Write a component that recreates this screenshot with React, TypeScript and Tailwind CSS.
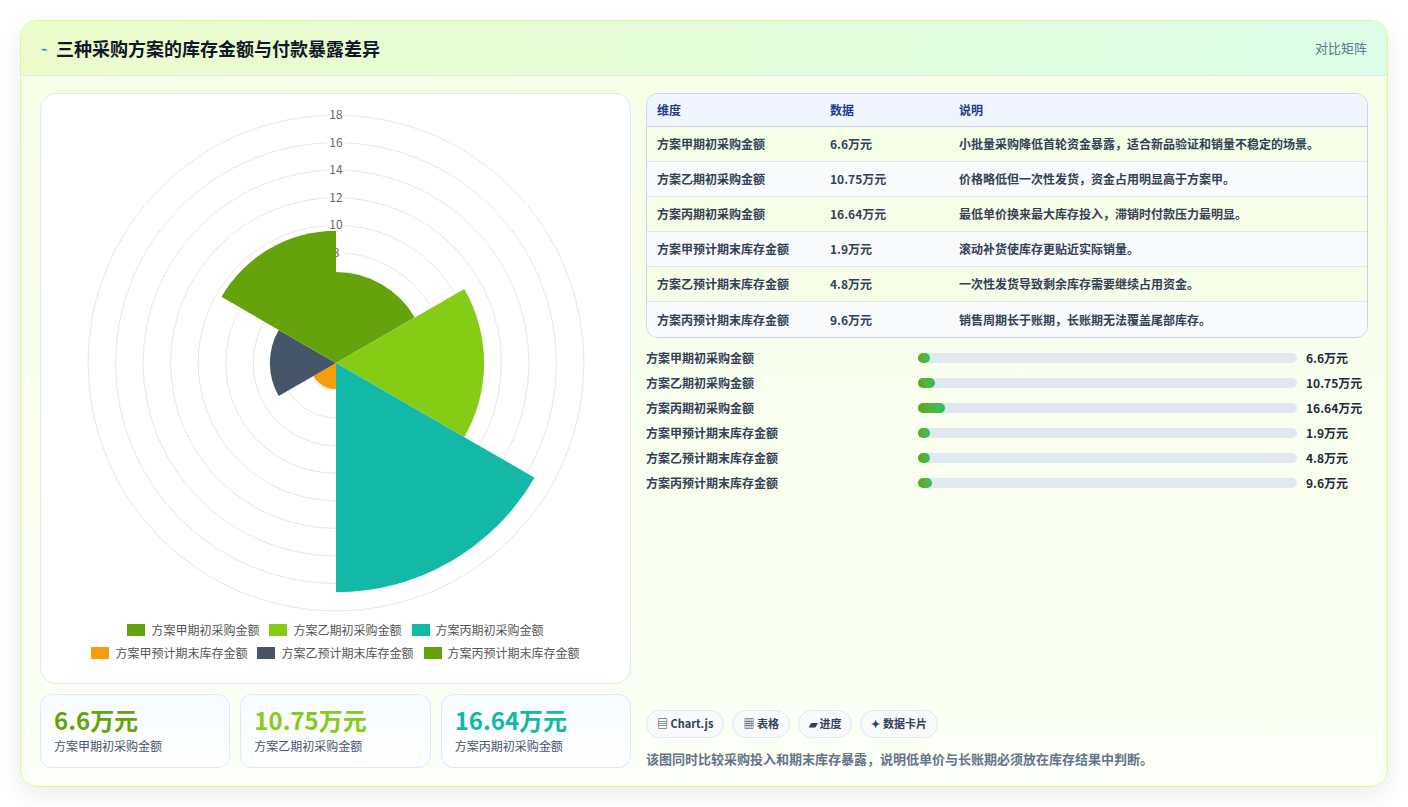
import React from "react";

const F = { fontFamily: '"Noto Sans CJK SC","Noto Sans",sans-serif' };

const segs = [
  { v: 6.6, c: "#65a30d", n: "方案甲期初采购金额" },
  { v: 10.75, c: "#84cc16", n: "方案乙期初采购金额" },
  { v: 16.64, c: "#14b8a6", n: "方案丙期初采购金额" },
  { v: 1.9, c: "#f59e0b", n: "方案甲预计期末库存金额" },
  { v: 4.8, c: "#475569", n: "方案乙预计期末库存金额" },
  { v: 9.6, c: "#65a30d", n: "方案丙预计期末库存金额" },
];

const rows = [
  ["方案甲期初采购金额", "6.6万元", "小批量采购降低首轮资金暴露，适合新品验证和销量不稳定的场景。"],
  ["方案乙期初采购金额", "10.75万元", "价格略低但一次性发货，资金占用明显高于方案甲。"],
  ["方案丙期初采购金额", "16.64万元", "最低单价换来最大库存投入，滞销时付款压力最明显。"],
  ["方案甲预计期末库存金额", "1.9万元", "滚动补货使库存更贴近实际销量。"],
  ["方案乙预计期末库存金额", "4.8万元", "一次性发货导致剩余库存需要继续占用资金。"],
  ["方案丙预计期末库存金额", "9.6万元", "销售周期长于账期，长账期无法覆盖尾部库存。"],
];

const bars = [12, 17, 27, 12, 12, 14];

function Polar() {
  const cx = 295, cy = 267, k = 248 / 18;
  const arc = (i: number, v: number) => {
    const r = v * k;
    const a0 = ((-90 + i * 60) * Math.PI) / 180;
    const a1 = ((-90 + (i + 1) * 60) * Math.PI) / 180;
    const x0 = cx + r * Math.cos(a0), y0 = cy + r * Math.sin(a0);
    const x1 = cx + r * Math.cos(a1), y1 = cy + r * Math.sin(a1);
    return `M${cx},${cy} L${x0},${y0} A${r},${r} 0 0 1 ${x1},${y1} Z`;
  };
  const ticks = [2, 4, 6, 8, 10, 12, 14, 16, 18];
  return (
    <svg width="590" height="520" viewBox="0 0 590 520">
      {ticks.map((t) => (
        <circle key={t} cx={cx} cy={cy} r={t * k} fill="none" stroke="#e5e7eb" strokeWidth="1" />
      ))}
      {ticks.filter((t) => t >= 8).map((t) => (
        <g key={t}>
          <rect x={cx - 9} y={cy - t * k - 7} width="18" height="14" fill="white" />
          <text x={cx} y={cy - t * k + 4} fontSize="12" textAnchor="middle" fill="#666" style={F}>{t}</text>
        </g>
      ))}
      {segs.map((s, i) => (
        <path key={i} d={arc(i, s.v)} fill={s.c} />
      ))}
    </svg>
  );
}

export default function App() {
  return (
    <div className="w-[1408px] h-[807px] bg-white p-5" style={F}>
      <div className="h-[767px] rounded-2xl border border-[#d9f99d] bg-gradient-to-b from-[#f7fee7] to-[#fbfff5] shadow-[0_8px_24px_rgba(0,0,0,0.08)] overflow-hidden flex flex-col">
        <div className="h-[55px] shrink-0 flex items-center justify-between px-5 bg-gradient-to-r from-[#ecfccb] to-[#dcfce7] border-b border-[#e2e8f0]">
          <div className="flex items-center gap-2">
            <span className="text-[#2563eb] text-[11px]">⌁</span>
            <span className="text-[18px] font-bold text-[#111827]">三种采购方案的库存金额与付款暴露差异</span>
          </div>
          <span className="text-[13px] text-[#64748b]">对比矩阵</span>
        </div>
        <div className="flex gap-[15px] px-[19px] pt-[17px]">
          <div className="w-[591px] flex flex-col gap-[10px]">
            <div className="h-[591px] rounded-2xl border border-[#e2e8f0] bg-white flex flex-col items-center pt-[2px]">
              <Polar />
              <div className="flex flex-col items-center gap-[5px] mt-[5px] text-[12px] text-[#555]">
                <div className="flex gap-[10px]">
                  {segs.slice(0, 3).map((s) => (
                    <div key={s.n} className="flex items-center gap-[6px]">
                      <span className="w-[18px] h-[12px]" style={{ background: s.c }} />
                      {s.n}
                    </div>
                  ))}
                </div>
                <div className="flex gap-[10px]">
                  {segs.slice(3).map((s) => (
                    <div key={s.n} className="flex items-center gap-[6px]">
                      <span className="w-[18px] h-[12px]" style={{ background: s.c }} />
                      {s.n}
                    </div>
                  ))}
                </div>
              </div>
            </div>
            <div className="grid grid-cols-3 gap-[10px]">
              {segs.slice(0, 3).map((s) => (
                <div key={s.n} className="h-[74px] rounded-xl border border-[#dbeafe] bg-gradient-to-b from-[#f8fbff] to-white px-[13px] pt-[9px]">
                  <div className="text-[24px] font-bold leading-[32px]" style={{ color: s.c }}>{s.v}万元</div>
                  <div className="text-[12px] text-[#475569] mt-[1px]">{s.n}</div>
                </div>
              ))}
            </div>
          </div>
          <div className="flex-1 flex flex-col">
            <div className="rounded-xl border border-[#cbd5e1] overflow-hidden text-[12px]">
              <div className="flex h-[33px] items-center bg-[#eff6ff] border-b border-[#cbd5e1] font-bold text-[#1e3a8a]">
                <div className="w-[183px] pl-[10px]">维度</div>
                <div className="w-[129px]">数据</div>
                <div>说明</div>
              </div>
              {rows.map((r, i) => (
                <div key={i} className={`flex h-[35px] items-center font-semibold text-[#334155] ${i < 5 ? "border-b border-[#e2e8f0]" : ""} ${i % 2 === 0 ? "bg-[#f7fee7]" : "bg-[#f8fafc]"}`}>
                  <div className="w-[183px] pl-[10px]">{r[0]}</div>
                  <div className="w-[129px]">{r[1]}</div>
                  <div>{r[2]}</div>
                </div>
              ))}
            </div>
            <div className="mt-[7px] flex flex-col">
              {rows.map((r, i) => (
                <div key={i} className="h-[25px] flex items-center text-[12px] font-semibold text-[#334155]">
                  <div className="w-[272px]">{r[0]}</div>
                  <div className="w-[379px] h-[10px] rounded-full bg-[#e2e8f0]">
                    <div className="h-full rounded-full bg-gradient-to-r from-[#65a30d] to-[#22c55e]" style={{ width: bars[i] }} />
                  </div>
                  <div className="ml-[9px] font-bold text-[#1e293b]">{r[1]}</div>
                </div>
              ))}
            </div>
            <div className="mt-auto flex gap-[8px] text-[11px] font-bold text-[#334155]">
              {["▤ Chart.js", "▦ 表格", "▰ 进度", "✦ 数据卡片"].map((t) => (
                <span key={t} className="h-[28px] px-[10px] flex items-center rounded-full border border-[#e2e8f0] bg-[#f8fafc]">{t}</span>
              ))}
            </div>
            <div className="mt-[11px] text-[13px] text-[#64748b] font-semibold">该图同时比较采购投入和期末库存暴露，说明低单价与长账期必须放在库存结果中判断。</div>
          </div>
        </div>
      </div>
    </div>
  );
}
